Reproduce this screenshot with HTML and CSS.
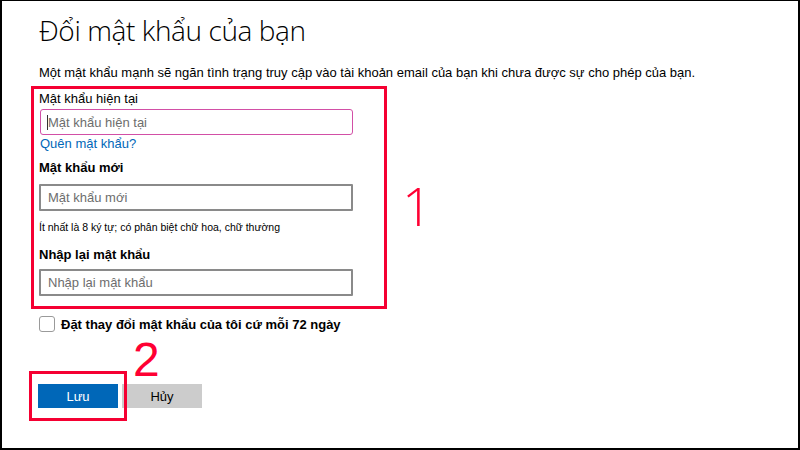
FILE: index.html
```html
<!DOCTYPE html>
<html lang="vi">

<head>
    <meta charset="UTF-8">
    <meta name="viewport" content="width=device-width, initial-scale=1.0">
    <title>Đổi mật khẩu</title>
    <link rel="stylesheet" href="styles.css">
</head>

<body>
    <div class="frame">
        <h1 class="title">Đổi mật khẩu của bạn</h1>
        <p class="intro">Một mật khẩu mạnh sẽ ngăn tình trạng truy cập vào tài khoản email của bạn khi chưa được sự cho phép của bạn.</p>

        <form class="pwForm">
            <div class="markBox">
                <label class="lbl" for="cur">Mật khẩu hiện tại</label>
                <span class="inputWrap">
                    <input type="password" id="cur" class="field focused" placeholder="Mật khẩu hiện tại">
                    <span class="caret"></span>
                </span>
                <a href="#" class="forgot">Quên mật khẩu?</a>

                <label class="lbl bold" for="new">Mật khẩu mới</label>
                <input type="password" id="new" class="field" placeholder="Mật khẩu mới">
                <p class="hint">Ít nhất là 8 ký tự; có phân biệt chữ hoa, chữ thường</p>

                <label class="lbl bold" for="again">Nhập lại mật khẩu</label>
                <input type="password" id="again" class="field again" placeholder="Nhập lại mật khẩu">

                <span class="stepNum one">1</span>
            </div>

            <label class="check">
                <span class="box"></span>
                <span>Đặt thay đổi mật khẩu của tôi cứ mỗi 72 ngày</span>
            </label>

            <div class="actions">
                <button type="submit" class="btn save">Lưu</button>
                <button type="button" class="btn cancel">Hủy</button>
                <span class="saveMark"></span>
                <span class="stepNum two">2</span>
            </div>
        </form>
    </div>
</body>

</html>
```

FILE: styles.css
```css
* {
    box-sizing: border-box;
}

body {
    margin: 0;
    font-family: "Liberation Sans", Arial, sans-serif;
    color: #000;
}

.frame {
    width: 800px;
    height: 450px;
    border: 2px solid #000;
    border-top-width: 1px;
    padding: 0 0 0 37px;
    background: #fff;
}

.title {
    margin: 10px 0 0;
    font-family: "Open Sans", sans-serif;
    font-weight: 300;
    font-size: 28px;
    line-height: 38px;
    letter-spacing: -0.4px;
}

.intro {
    margin: 16px 0 0;
    font-size: 13px;
    line-height: 16px;
}

.pwForm {
    margin-top: 5px;
}

.markBox {
    position: relative;
    width: 356px;
    margin-left: -8px;
    padding: 0 0 10px 5px;
    border: 3px solid #f50032;
    display: flex;
    flex-direction: column;
    align-items: flex-start;
}

.lbl {
    font-size: 13px;
    line-height: 16px;
    margin-top: 2px;
}

.bold {
    font-weight: bold;
    margin-top: 9px;
}

.inputWrap {
    position: relative;
    margin-top: 2px;
    margin-left: 1px;
}

.field {
    display: block;
    width: 314px;
    height: 27px;
    margin-top: 8px;
    padding: 0 7px;
    border: 2px solid #8a8a8a;
    border-radius: 1px;
    font-family: "Liberation Sans", Arial, sans-serif;
    font-size: 13px;
    outline: none;
}

.field::placeholder {
    color: #6d6d6d;
}

.again {
    margin-top: 6px;
}

.focused {
    margin-top: 0;
    width: 313px;
    height: 26px;
    border: 1.5px solid #d24fa6;
    border-radius: 3px;
}

.caret {
    position: absolute;
    left: 7px;
    top: 6px;
    width: 1px;
    height: 15px;
    background: #333;
}

.forgot {
    margin-top: 1px;
    margin-left: 1px;
    font-size: 13px;
    line-height: 15px;
    color: #0067b8;
    text-decoration: none;
}

.hint {
    margin: 10px 0 5px;
    font-size: 10.5px;
    line-height: 12px;
}

.stepNum {
    position: absolute;
    color: #ff0033;
}

.one {
    left: 368px;
    top: 97px;
    font-family: "Open Sans", sans-serif;
    font-weight: 300;
    font-size: 53px;
    line-height: 40px;
}

.check {
    display: flex;
    align-items: center;
    gap: 6px;
    margin-top: 7px;
    font-size: 13px;
    font-weight: bold;
}

.box {
    width: 16px;
    height: 16px;
    border: 1px solid #9a9a9a;
    border-radius: 3px;
    background: #fff;
}

.actions {
    position: relative;
    display: flex;
    gap: 4px;
    margin-top: 52px;
    margin-left: -1px;
}

.btn {
    width: 80px;
    height: 24px;
    border: none;
    font-family: "Liberation Sans", Arial, sans-serif;
    font-size: 13px;
}

.save {
    background: #0067b8;
    color: #fff;
}

.cancel {
    background: #cccccc;
    color: #000;
}

.saveMark {
    position: absolute;
    left: -9px;
    top: -13px;
    width: 98px;
    height: 50px;
    border: 3px solid #f50032;
}

.two {
    left: 95px;
    top: -48px;
    font-family: "Liberation Sans", Arial, sans-serif;
    font-size: 48px;
    line-height: 1;
}
```
